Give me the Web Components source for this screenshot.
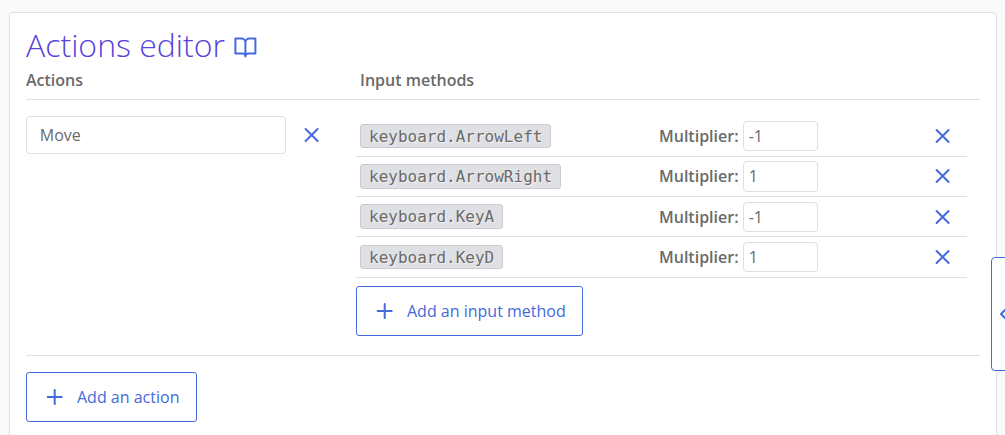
<!DOCTYPE html>
<html lang="en">
<head>
<meta charset="utf-8">
<title>Actions editor</title>
<style>
html,body{margin:0;height:435px;overflow:hidden;background:#fafafa}
body{font:16px/24px "Open Sans","Noto Sans",sans-serif;color:#6a6a6a;--line:#dedfe2;--accent:#446adb}
</style>
</head>
<body>
<editor-app></editor-app>
<script>
const define = (name, html) => customElements.define(name, class extends HTMLElement {
  constructor() {
    super();
    this.attachShadow({mode: 'open'}).innerHTML = html;
  }
});

const shapes = {
  x: '<path d="M17.6 6l-12 12M5.6 6l12 12"/>',
  plus: '<path d="M11.7 5v14M4.7 12h14"/>',
  book: '<path transform="translate(.4 .5)" d="M2 3h6a4 4 0 0 1 4 4v14a3 3 0 0 0-3-3H2zM22 3h-6a4 4 0 0 0-4 4v14a3 3 0 0 1 3-3h7z"/>',
  left: '<path d="m15 18-6-6 6-6"/>'
};
customElements.define('line-icon', class extends HTMLElement {
  constructor() {
    super();
    this.attachShadow({mode: 'open'});
  }
  connectedCallback() {
    this.shadowRoot.innerHTML = `<style>:host{display:block;flex:none;width:24px;height:24px;color:var(--accent)}
      svg{display:block;width:100%;height:100%}</style>
      <svg viewBox="0 0 24 24" fill="none" stroke="currentColor" stroke-width="2" stroke-linecap="round" stroke-linejoin="round">${shapes[this.getAttribute('name')]}</svg>`;
  }
});

define('add-button', `<style>
  :host{display:flex;width:fit-content}
  button{box-sizing:border-box;height:50px;display:flex;align-items:center;margin:0;padding:0 16.2px 0 16px;border:1px solid var(--accent);border-radius:3px;background:#fff;color:var(--accent);font:inherit;white-space:nowrap}
  line-icon{margin-right:10px}
</style><button><line-icon name="plus"></line-icon><slot></slot></button>`);

customElements.define('method-row', class extends HTMLElement {
  constructor() {
    super();
    this.attachShadow({mode: 'open'});
  }
  connectedCallback() {
    this.shadowRoot.innerHTML = `<style>
      :host{display:grid;grid-template-columns:299px 280.5px 1fr;align-items:center;box-sizing:border-box;height:40.33px;padding-left:4px;border-bottom:1px solid var(--line)}
      .key{box-sizing:border-box;width:fit-content;height:24.5px;padding:0 8px;border:1px solid #c8cbd0;border-radius:3px;background:#dfe0e4;font:16px/23px "DejaVu Sans Mono",monospace;text-shadow:1px 1px #fff8}
      label{display:flex;align-items:center;gap:4.5px;font-weight:600}
      input{box-sizing:border-box;width:75px;height:30.33px;margin:0;padding:0 4.6px;border:1px solid var(--line);border-radius:4px;background:#fff;color:inherit;font:400 16px/24px "Open Sans",sans-serif}
      line-icon{margin-left:-9px}
    </style>
    <span class="key"><slot></slot></span>
    <label>Multiplier: <input value="${this.getAttribute('value')}"></label>
    <line-icon name="x"></line-icon>`;
  }
});

define('side-toggle', `<style>
  :host{position:absolute;left:991px;top:257px;box-sizing:border-box;width:40px;height:114px;border:1px solid var(--accent);border-radius:4px;background:#fff;display:flex;align-items:center}
</style><line-icon name="left"></line-icon>`);

define('editor-app', `<style>
  :host{display:block;height:435px;box-sizing:border-box;padding:12px 8px 0 9px;position:relative;overflow:hidden}
  main{box-sizing:border-box;height:460px;padding:11px 16px;border:1px solid var(--line);border-radius:4px;background:#fff}
  h1{display:flex;align-items:center;gap:8.4px;height:44px;margin:0;color:#5543da;font-weight:300;font-size:32px;line-height:42px}
  h1 span{margin-top:-2px}
  h1 line-icon{margin-top:1px}
  .head,.body{display:grid;grid-template-columns:330px 1fr;border-bottom:1px solid var(--line)}
  .head{height:31px;font-weight:600}
  .head span+span{padding-left:4px}
  .body{padding-top:16px;height:239px}
  .name{display:flex;height:38px;align-items:center;gap:14px}
  input{box-sizing:border-box;width:260px;height:38px;margin:0;padding:0 12.8px;border:1px solid var(--line);border-radius:4px;background:#fff;color:inherit;font:inherit}
  .methods{width:611px;padding-top:.4px}
  .methods add-button{margin-top:8.3px}
  main>add-button{margin-top:16px}
</style>
<main>
  <h1><span>Actions editor</span><line-icon name="book"></line-icon></h1>
  <div class="head"><span>Actions</span><span>Input methods</span></div>
  <div class="body">
    <div class="name"><input value="Move"><line-icon name="x"></line-icon></div>
    <div class="methods">
      <method-row value="-1">keyboard.ArrowLeft</method-row>
      <method-row value="1">keyboard.ArrowRight</method-row>
      <method-row value="-1">keyboard.KeyA</method-row>
      <method-row value="1">keyboard.KeyD</method-row>
      <add-button>Add an input method</add-button>
    </div>
  </div>
  <add-button>Add an action</add-button>
</main>
<side-toggle></side-toggle>`);
</script>
</body>
</html>
